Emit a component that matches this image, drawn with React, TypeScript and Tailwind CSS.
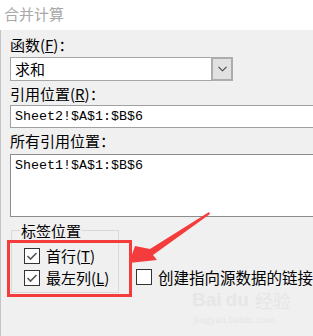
import React from "react";

const cjk = { fontFamily: '"Noto Sans CJK SC", "Noto Sans", sans-serif' };
const mono = { fontFamily: '"Liberation Mono", "Noto Sans CJK SC", monospace' };

function Check({ checked }: { checked: boolean }) {
  return (
    <div className="w-[16px] h-[16px] border border-[#333333] bg-white flex items-center justify-center shrink-0">
      {checked && (
        <svg width="14" height="14" viewBox="0 0 14 14">
          <polyline points="2.5,7 5.5,10 11.5,4" fill="none" stroke="#555555" strokeWidth="1.6" />
        </svg>
      )}
    </div>
  );
}

export default function App() {
  return (
    <div className="w-[313px] h-[336px] overflow-hidden relative bg-[#f0f0f0] text-black" style={cjk}>
      <div className="h-[30px] bg-white pl-[4px] pt-[4px] text-[15px] leading-[20px] text-[#a8a8a8]">合并计算</div>
      <div className="h-[306px] border-l border-[#c4c4c4] pl-[9px] flex flex-col">
        <div className="mt-[5px] h-[20px] text-[15px] leading-[20px]">
          函数(<span className="underline">F</span>)：
        </div>
        <div className="mt-[2px] h-[24px] w-[223px] flex border border-[#a6a6a6] bg-white">
          <div className="flex-1 pl-[4px] text-[15px] leading-[22px]">求和</div>
          <div className="w-[22px] -my-px -mr-px border-2 border-[#adadad] bg-[#e1e1e1] flex items-center justify-center">
            <svg width="9" height="6" viewBox="0 0 9 6">
              <polyline points="0.5,0.8 4.5,4.8 8.5,0.8" fill="none" stroke="#404040" strokeWidth="1.1" />
            </svg>
          </div>
        </div>
        <div className="mt-[3px] h-[20px] text-[15px] leading-[20px]">
          引用位置(<span className="underline">R</span>)：
        </div>
        <div className="mt-[1px] h-[23px] w-[320px] border border-[#a0a0a0] bg-white pl-[4px] text-[13.33px] leading-[21px]" style={mono}>
          Sheet2!$A$1:$B$6
        </div>
        <div className="mt-[3px] h-[20px] text-[15px] leading-[20px]">所有引用位置：</div>
        <div className="mt-[3px] h-[63px] w-[320px] border border-[#8c8c8c] bg-white pl-[4px] pt-[2px] text-[13.33px] leading-[18px]" style={mono}>
          Sheet1!$A$1:$B$6
        </div>
        <div className="mt-[13px] flex items-start">
          <div className="ml-[1px] w-[120px] h-[63px] border border-[#d9d9d9] relative">
            <div className="absolute left-[8px] -top-[10px] px-[1px] bg-[#f0f0f0] text-[15px] leading-[20px]">标签位置</div>
            <div className="mt-[17px] ml-[12px] flex items-center h-[16px]">
              <Check checked />
              <span className="ml-[6px] text-[15px] leading-[20px]">
                首行(<span className="underline">T</span>)
              </span>
            </div>
            <div className="mt-[6px] ml-[12px] flex items-center h-[16px]">
              <Check checked />
              <span className="ml-[6px] text-[15px] leading-[20px]">
                最左列(<span className="underline">L</span>)
              </span>
            </div>
          </div>
          <div className="ml-[17px] mt-[39px] flex items-center h-[16px] whitespace-nowrap">
            <Check checked={false} />
            <span className="ml-[6px] text-[15.5px] leading-[18px]">创建指向源数据的链接</span>
          </div>
        </div>
      </div>

      {/* red highlight box */}
      <div className="absolute left-[7px] top-[240px] w-[125px] h-[57px] border-[3px] border-[#f53c3c]" />

      {/* red arrow */}
      <svg className="absolute left-0 top-0" width="313" height="336" viewBox="0 0 313 336">
        <polygon
          points="209,212 150,249 135,246 129,263 157,260 153,255 210,214"
          fill="#f53c3c"
        />
      </svg>

      {/* watermark */}
      <div className="absolute left-[192px] top-[292px] flex items-end text-[#e6e6e6] select-none">
        <span className="text-[19px] leading-[16px] font-bold" style={{ fontFamily: '"Liberation Sans", sans-serif' }}>Bai</span>
        <span className="text-[19px] leading-[16px] font-bold ml-[4px]" style={{ fontFamily: '"Liberation Sans", sans-serif' }}>du</span>
        <span className="text-[18px] leading-[16px] ml-[6px]">经验</span>
      </div>
      <div className="absolute left-[193px] top-[312px] text-[11px] leading-[14px] text-[#e6e6e6]" style={{ fontFamily: '"Liberation Serif", serif' }}>
        jingyan.baidu.com
      </div>
    </div>
  );
}
